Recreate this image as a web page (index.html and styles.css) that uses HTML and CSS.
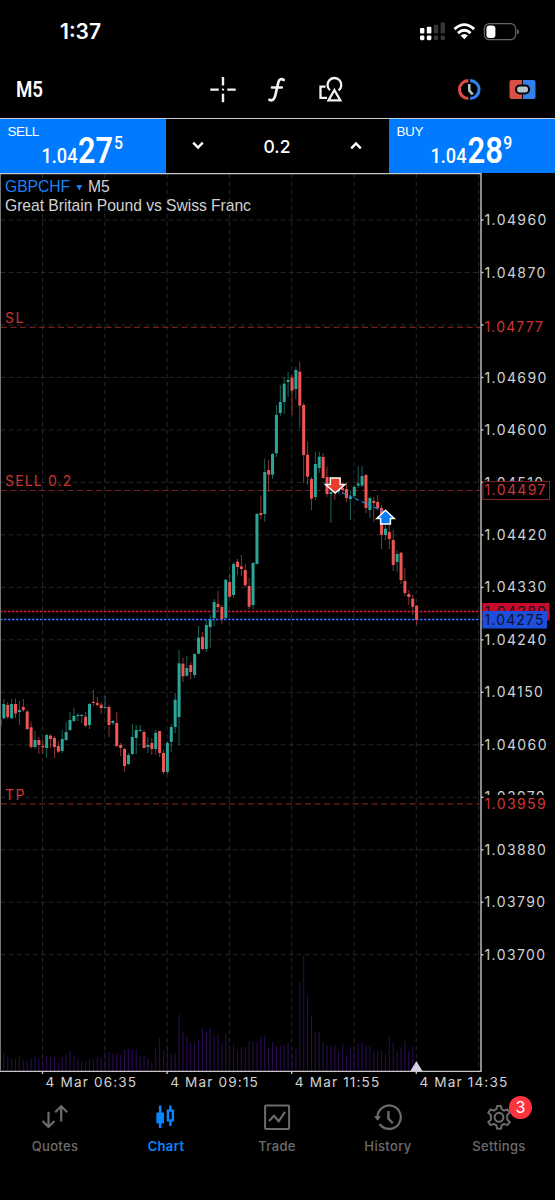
FILE: index.html
```html
<!DOCTYPE html>
<html lang="en">
<head>
<meta charset="utf-8">
<title>GBPCHF M5</title>
<link rel="stylesheet" href="styles.css">
</head>
<body>
<div class="app">
  <header class="status">
    <span class="clock">1:37</span>
    <svg class="status-icons" width="102" height="20" viewBox="0 0 102 20">
      <g fill="#fff"><rect x="1" y="6" width="4.4" height="5.4" rx="1"/><rect x="7.8" y="4.7" width="4.6" height="6.7" rx="1"/><rect x="1" y="13.4" width="4.4" height="4.8" rx="1.4"/><rect x="7.8" y="13.4" width="4.6" height="4.8" rx="1.4"/></g>
      <g fill="#363636"><rect x="14.8" y="2.7" width="4.4" height="8.7" rx="1"/><rect x="21.6" y=".4" width="4.4" height="11" rx="1"/><rect x="14.8" y="13.4" width="4.4" height="4.8" rx="1.4"/><rect x="21.6" y="13.4" width="4.4" height="4.8" rx="1.4"/></g>
      <g fill="none" stroke="#fff" stroke-width="2.8"><path d="M35.5 7.1Q45.3 -1.9 55.1 7.1"/><path d="M39 11.1Q45.3 5.3 51.6 11.1"/></g>
      <path fill="#fff" d="M41.6 13.6Q45.3 10.4 49 13.6L45.3 17.3Z"/>
      <rect x="65.4" y="1.7" width="31.2" height="16" rx="5" fill="none" stroke="#676767" stroke-width="1.2"/>
      <rect x="67.4" y="3.5" width="9" height="12.4" rx="3.2" fill="#fff"/>
      <path d="M98.2 7v5.6q1.7-.8 1.7-2.8T98.2 7Z" fill="#777"/>
    </svg>
  </header>

  <nav class="toolbar">
    <span class="timeframe">M5</span>
    <div class="tools">
      <svg width="30" height="30" viewBox="0 0 30 30"><path d="M15 2v8.4M15 18.800v8.400M2.300 14.600h8.400M19.300 14.600h8.400" stroke="#f2f2f2" stroke-width="2.400"/><circle cx="15" cy="14.600" r="1.100" fill="#fff"/></svg>
      <svg width="30" height="30" viewBox="0 0 30 30"><path d="M21.700 4.900C19.200 3.200 17 4.200 16.200 7.700L13.400 20C12.500 24.300 10.800 26.300 7.400 24.800M10 12.500h9.700" fill="none" stroke="#f2f2f2" stroke-width="2.700" stroke-linecap="round"/></svg>
      <svg width="30" height="30" viewBox="0 0 30 30"><g fill="none" stroke="#f2f2f2" stroke-width="2.300"><path d="M9.500 11.700H4.500v11.200h6.500"/><path d="M14 15.200A6.900 6.900 0 1 1 22.600 15.400"/><path d="M18.400 15L24.300 25.400H12.500Z"/></g></svg>
    </div>
    <div class="modes">
      <svg width="28" height="24" viewBox="0 0 28 24"><path d="M12.400 1.100A10.500 10.500 0 0 0 12.400 22.100V19A7 7 0 0 1 12.400 4.200Z" fill="#d84f45"/><path d="M14.100 1.100A10.500 10.500 0 0 1 14.100 22.100V19A7 7 0 0 0 14.100 4.200Z" fill="#3180ee"/><path d="M13.300 6v6.500l3.400 4" fill="none" stroke="#b2c4ca" stroke-width="2.600"/></svg>
      <svg width="28" height="24" viewBox="0 0 28 24"><path d="M2.500 2H13v19H2.500q-2 0-2-2V4q0-2 2-2Z" fill="#d84f45"/><path d="M14 2h10.500q2 0 2 2v15q0 2-2 2H14Z" fill="#3180ee"/><rect x="7.100" y="7.400" width="12.900" height="8" rx="3.600" fill="#b2c4ca" stroke="#050505" stroke-width="2"/></svg>
    </div>
  </nav>

  <section class="deal">
    <div class="quote">
      <span class="side">SELL</span>
      <svg class="price" width="166" height="36" viewBox="0 0 166 36"><text class="din" x="41.500" y="25.500" font-size="19.500" textLength="36" lengthAdjust="spacingAndGlyphs">1.04</text><text class="din bold" x="78" y="26" font-size="36.500" textLength="35" lengthAdjust="spacingAndGlyphs">27</text><text class="din" x="114" y="11.500" font-size="18" textLength="9" lengthAdjust="spacingAndGlyphs">5</text></svg>
    </div>
    <div class="volume">
      <svg width="14" height="10" viewBox="0 0 14 10"><path d="M2.200 1.700L7 6.500l4.800-4.800" fill="none" stroke="#fff" stroke-width="2.400"/></svg>
      <span>0.2</span>
      <svg width="14" height="10" viewBox="0 0 14 10"><path d="M2.200 7.300L7 2.500l4.800 4.800" fill="none" stroke="#fff" stroke-width="2.400"/></svg>
    </div>
    <div class="quote">
      <span class="side">BUY</span>
      <svg class="price" width="166" height="36" viewBox="0 0 166 36"><text class="din" x="41.500" y="25.500" font-size="19.500" textLength="36" lengthAdjust="spacingAndGlyphs">1.04</text><text class="din bold" x="78.500" y="26" font-size="36.500" textLength="35.500" lengthAdjust="spacingAndGlyphs">28</text><text class="din" x="114.300" y="11.500" font-size="18" textLength="9" lengthAdjust="spacingAndGlyphs">9</text></svg>
    </div>
  </section>

  <main class="chart-wrap">
    <svg id="chart" class="chart" width="555" height="922" viewBox="0 173 555 922"></svg>
  </main>

  <nav class="tabs">
    <a class="tab"><svg width="30" height="30" viewBox="0 0 30 30"><path d="M8.500 7.800v15M2.500 17l6 6 6-6M21.200 17.500v-15M15.200 8.300l6-6 6 6" fill="none" stroke="currentColor" stroke-width="2.200"/></svg><span>Quotes</span></a>
    <a class="tab active"><svg width="30" height="30" viewBox="0 0 30 30"><path d="M5.400 8.400h2.500V1.500h2.500v6.900h2.600v11.200h-2.600v4.500H7.900v-4.500H5.400Z" fill="currentColor"/><path d="M16.900 6.600h5v9.800h-5ZM19.400 1.500v5M19.400 16.500v5.400" fill="none" stroke="currentColor" stroke-width="2.400"/></svg><span>Chart</span></a>
    <a class="tab"><svg width="30" height="30" viewBox="0 0 30 30"><rect x="3.100" y="1.500" width="24" height="23.600" rx="1" fill="none" stroke="currentColor" stroke-width="2"/><path d="M7 17l5-5.200 4.700 5.500L23 7.800" fill="none" stroke="currentColor" stroke-width="2.200"/></svg><span>Trade</span></a>
    <a class="tab"><svg width="30" height="30" viewBox="0 0 30 30"><path d="M4.400 13.300A11.700 11.700 0 1 1 6.600 20" fill="none" stroke="currentColor" stroke-width="2.200"/><path d="M1 12.300h7l-3.500 4.500Z" fill="currentColor"/><path d="M15.400 7v7.500l4.400 4.700" fill="none" stroke="currentColor" stroke-width="2.400"/></svg><span>History</span></a>
    <a class="tab"><span class="badge">3</span><svg width="30" height="30" viewBox="0 0 30 30"><path d="M13.100 1.900h3.800l.8 3.300 2.400 1.400 3.300-1.200 2.400 3.300-2.600 2.200.1 4.800 2.500 2.200-2.400 3.200-3.300-1.200-2.500 1.500-.7 3.400h-3.800l-.7-3.400-2.600-1.500-3.300 1.200-2.200-3.200 2.600-2.200v-4.800L4.300 8.700l2.200-3.300 3.300 1.200 2.600-1.400Z" fill="none" stroke="currentColor" stroke-width="2" stroke-linejoin="round"/><circle cx="15" cy="13.300" r="4.400" fill="none" stroke="currentColor" stroke-width="2.100"/></svg><span>Settings</span></a>
  </nav>
</div>
<script src="chart.js"></script>
</body>
</html>
```
FILE: styles.css
```css
* { box-sizing: border-box; }
body { margin: 0; background: #000; color: #fff; font-family: Inter, "Liberation Sans", sans-serif; }
.app { width: 555px; height: 1200px; display: flex; flex-direction: column; overflow: hidden; background: #000; }
svg { display: block; }

.status { height: 62px; padding: 0 34px 0 60px; display: flex; justify-content: space-between; align-items: flex-end; }
.clock { font-size: 21px; font-weight: 600; line-height: 22px; margin-bottom: 19px; letter-spacing: 0; }
.status-icons { margin-bottom: 20px; }

.toolbar { height: 56px; display: flex; align-items: center; padding: 0 18px 0 16px; }
.timeframe { width: 30px; font: 600 22px/26px Roboto, sans-serif; transform: scaleX(.85); transform-origin: 0 50%; white-space: nowrap; margin-top: -1px; }
.tools { display: flex; gap: 24px; margin-left: 162px; }
.modes { display: flex; gap: 25px; margin-left: auto; }
.din { font-family: Roboto, sans-serif; font-weight: 500; fill: #fff; }
.bold { font-weight: 600; }

.deal { height: 55px; display: flex; border-top: 1.5px solid #c9cdd2; flex: none; }
.quote { width: 166px; background: #007aff; height: 54px; }
.side { display: block; font: 13.5px/15px "Liberation Sans", sans-serif; padding: 5px 0 0 7.5px; height: 18px; letter-spacing: -.4px; }
.price { overflow: visible; }
.volume { flex: 1; display: flex; align-items: center; justify-content: space-between; padding: 0 26px 0 25px; font-size: 17.5px; font-weight: 500; }
.volume span { padding-top: 1px; }

.chart-wrap { height: 922px; flex: none; }
.chart text { font-family: Inter, sans-serif; font-size: 14px; letter-spacing: 1.4px; fill: #d2d2d2; }
.chart .time { font-size: 13.6px; letter-spacing: 1.15px; }
.chart .symbol { font: 15.7px "Liberation Sans", sans-serif; letter-spacing: -.05px; }
.chart .name { fill: #1683f5; }
.chart .red { fill: #cf3434; }
.chart .label { letter-spacing: 1.15px; }
.chart .dark { fill: #16102a; }
.grid { stroke: #28282d; stroke-width: 1; stroke-dasharray: 4.5 3.5; }
.level { stroke: #761f1e; stroke-width: 1.2; stroke-dasharray: 6 3.5; }
.frame { stroke: #c6c6c6; stroke-width: 1.4; fill: none; }
.up { fill: #2ba597; stroke: #2ba597; }
.down { fill: #ee5555; stroke: #ee5555; }
.wick { stroke-width: 1; opacity: .6; }
.body { stroke: none; }
.vol { stroke: #2a0b50; stroke-width: 1.1; }

.tabs { height: 105px; flex: none; display: flex; }
.tab { flex: 1; display: flex; flex-direction: column; align-items: center; position: relative; padding-top: 9px; color: #6c6c6c; font-size: 13px; font-weight: 500; letter-spacing: .35px; }
.tab svg { margin-left: -1px; }
.tab span { line-height: 18px; margin-top: 3px; margin-left: -1px; }
.tab.active { color: #0a84ff; font-weight: 600; }
.tab .badge { position: absolute; left: 65px; top: 1px; width: 23px; height: 23px; border-radius: 50%; margin: 0; background: #fc3440; color: #fff; line-height: 23px; font-size: 16px; letter-spacing: 0; font-weight: 400; text-align: center; }
```
FILE: chart.js
```js
// Each candle: direction, high, body top, body bottom, low (plot units).
const candles = `g 716 719 726 727|g 699 704 718.3 719|r 702 705 717 719|g 699 704 718.3 719|r 698.5 704 713.5 718|g 701 710 712 725|r 699 707 710 712|r 710 711.5 729 730|r 721.5 727.3 747 749|g 731 740 747 749|r 737 740 745 754|r 739 746 747.3 753|g 734 735 748 758|r 734 735.7 739 748|r 736 738 747 758|r 741 746 751.7 753|g 730 739 751 753|g 722 732 740 741|g 712 720 730 731|g 708 716 721 722|g 713 715 716 721|g 714 715 716 723|r 712 716.7 725.7 727|g 703 704 725 729|r 690 702 703 706|r 697 703 705 706|r 702 704.7 708 714|g 696 707 708 709|r 705 707 725 737|g 720 721 723 725|r 712 723 746 747|r 743 745 748 756|r 748 749 766 772|g 753 755 764 765|g 724 737 754 755|g 725 730 738 754|g 725 730 731 732|r 730 732 748 748|g 737 745 747 753|r 738 743 749 755|g 730 732.7 749 755|r 731 731 753 757|r 750 753 772 774|g 741 743 772 774|g 724 727 742 752|g 693 699.7 727 733|g 650 663.3 717 745|r 658 663.7 676.3 682|g 656 668 675.7 677|r 662 665 672 679|g 653 654 675 678|g 626 637.7 653.7 654|r 632 637 649 650|g 620 625 649 652|g 615 619.7 627 648|g 599 602 618 626|r 591 604 607 611|r 605 607 619 624|g 579 579.7 618 619|r 574 582 596.7 598|g 562 564 595 598|r 559 561.7 567 575|r 555 566.3 569 576|r 564 570 585.3 587|r 578 586 606.7 609|g 562 563 605 609|g 512.7 514 564 564|r 495.7 513 515 519|g 458.7 472 514 521.7|r 460 470 474.7 491.7|g 453 454 474.7 478.7|g 405 415 453.3 457|g 385 402 413 416|g 377 383.7 402 413.7|g 372 380 382 396.7|r 375 377.7 390.7 415|g 367 370 389 399|r 362 371.7 405.7 428|r 403 405 455 483|r 441.7 454.7 476.7 485|r 477 479 498.7 510|g 451.7 464 497 500|g 451.7 456.7 468 472.7|r 453 457 478 479|r 466.7 477 494 496.7|g 483 492 494 523|r 485 490 491 500|g 486 490 491 494|r 482 488 490 494|r 483 489 498 502|g 490 497 499 520|g 485 487 496 498|g 466 483.5 485.5 488|g 466 476 485.5 487|r 474 475 508 513|g 497 498 510 518|r 497 501 503 522|r 495 502 508 510|r 505 508 535 549|g 521 528.7 535 540|r 525 532 539 549|r 530 540 565 571|g 550 554 562 572|r 552 552.7 580 584|r 568 581 593 596|r 590 594 597 605|r 595 598.7 606.7 615|r 605 605.7 620 625`
  .split('|').map(c => c.split(' '));

// Tick volume bar heights, in thirds of a pixel.
const volumes = [0,54,41,38,38,43,33,33,38,42,37,33,46,42,42,25,41,49,61,46,37,31,30,36,37,41,38,56,56,50,53,49,65,65,65,65,46,45,37,26,71,99,61,77,53,52,170,116,104,85,81,94,130,118,130,103,111,83,111,79,79,63,72,72,91,88,88,101,104,70,87,73,75,77,84,53,67,266,349,227,165,118,118,86,76,76,76,61,80,45,73,58,81,87,76,76,63,59,63,52,103,87,61,70,89,59,73,18];

const x = i => 416.6 - (107 - i) * 3.894;
const line = (cls, x1, y1, x2, y2, extra = '') => `<line class="${cls}" x1="${x1}" y1="${y1}" x2="${x2}" y2="${y2}" ${extra}/>`;
const text = (cls, tx, ty, s) => `<text class="${cls}" x="${tx}" y="${ty}">${s}</text>`;
let out = '';

for (let k = 0; k < 8; k++) out += line('grid', 42.5 + k * 62.3, 174, 42.5 + k * 62.3, 1071);
for (let k = 0; k < 15; k++) out += line('grid', 1, 220 + k * 52.48, 480, 220 + k * 52.48);
volumes.forEach((v, i) => { if (v) out += line('vol', x(i), 1071 - v / 3, x(i), 1071); });

out += line('level', 1, 327.3, 480, 327.3) + line('level', 1, 490.5, 480, 490.5) + line('level', 1, 803.8, 480, 803.8);
out += line('', 0, 611.5, 480, 611.5, 'stroke="#d01f47" stroke-width="1.3" stroke-dasharray="2.5 1.5"');
out += line('', 0, 619.5, 480, 619.5, 'stroke="#386fff" stroke-width="1.4" stroke-dasharray="2.5 1.5"');

candles.forEach(([d, high, top, bottom, low], i) => {
  const cls = d === 'g' ? 'up' : 'down';
  out += line(cls + ' wick', x(i), high, x(i), low);
  out += `<rect class="${cls} body" x="${x(i) - 1.5}" y="${top}" width="3" height="${Math.max(1, bottom - top)}"/>`;
});

out += line('', 336, 490, 385, 512, 'stroke="#1685f2" stroke-width="1.3" stroke-dasharray="4 3"');
out += '<path d="M330.3 478h9.8v6.500h4.800l-9.700 8.500-9.700-8.500h4.800Z" fill="#e63d2e" stroke="#fff" stroke-width="1.500"/>';
out += '<path d="M380.600 524h9.800v-5.500h3.800l-8.700-8.300-8.700 8.300h3.800Z" fill="#0a7cfb" stroke="#fff" stroke-width="1.500"/>';

out += '<path class="frame" d="M0 173.600H481V1071.400H0"/>';
out += line('', .5, 174, .5, 1071, 'stroke="#777"');
out += '<path d="M416.400 1061l6 10h-12Z" fill="#d9cfe4"/>';

for (let k = 0; k < 15; k++) {
  const y = 220 + k * 52.48;
  out += line('frame', 481, y, 483.5, y);
  if (k !== 2) out += text('', 484.5, y + 5.1, (1.0496 - k * .0009).toFixed(5));
}
['4 Mar 06:35', '4 Mar 09:15', '4 Mar 11:55', '4 Mar 14:35'].forEach((s, k) => {
  const tx = 42.5 + k * 124.6;
  out += line('frame', tx, 1071, tx, 1074) + text('time', tx + 3.1, 1086.8, s);
});

out += text('red label', 484.5, 332, '1.04777');
out += '<rect x="483" y="481.500" width="66.500" height="18" fill="#000" stroke="#7b2420"/>' + text('red', 484.5, 495.3, '1.04497');
out += '<rect x="484" y="795" width="66" height="18" fill="#000"/>' + text('red', 484.5, 809, '1.03959');
out += '<rect x="482.500" y="603" width="67" height="17.500" fill="#c80a2b"/>' + text('dark', 484.5, 616.5, '1.04289');
out += '<rect x="482.500" y="611" width="64.500" height="17.500" fill="#1c4fdc"/>' + text('dark label', 484.5, 624.7, '1.04275');

out += text('red', 5, 322.8, 'SL') + text('red label', 5, 486, 'SELL 0.2') + text('red', 5, 799.7, 'TP');
out += text('symbol name', 5, 192, 'GBPCHF') + '<path d="M76.300 185h6l-3 5.500Z" fill="#1683f5"/>' + text('symbol', 88, 192, 'M5');
out += text('symbol', 5, 211.3, 'Great Britain Pound vs Swiss Franc');

document.getElementById('chart').innerHTML = out;
```
